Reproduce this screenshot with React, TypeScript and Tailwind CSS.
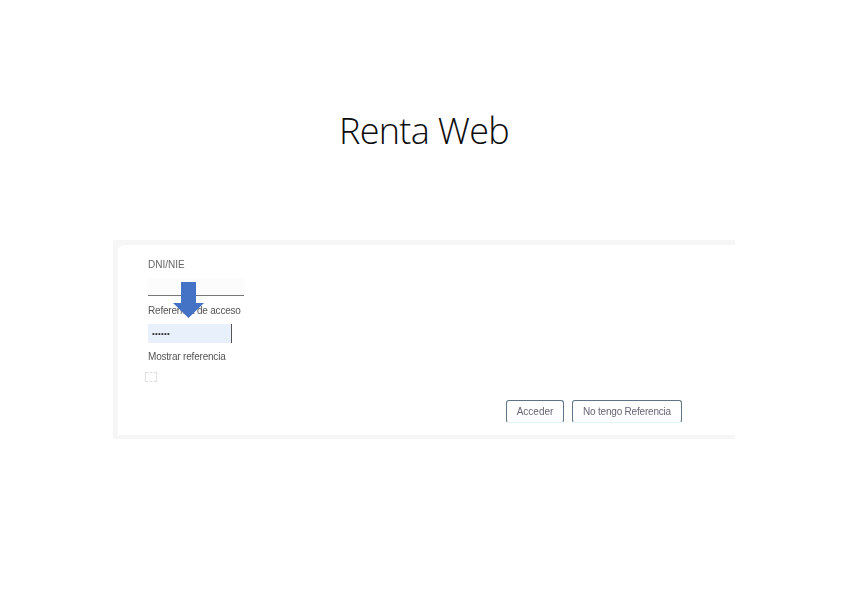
export default function App() {
  return (
    <div className="w-[848px] h-[599px] bg-white overflow-hidden flex flex-col items-center font-['Liberation_Sans',sans-serif]">
      <h1 className="mt-[108px] h-[46px] w-full text-center text-[36px] leading-[46px] font-light text-[#0d0d0d] font-['Open_Sans',sans-serif] tracking-[-0.7px]">
        Renta Web
      </h1>

      <div className="mt-[86px] w-[622px] h-[199px] bg-[#f6f6f6] pt-[5px] pl-[5px] pb-[4px]">
        <div className="relative w-full h-full bg-white rounded-tl-[6px] pl-[30px] pt-[14px] flex flex-col">
          <label className="text-[10px] leading-[12px] text-[#666] blur-[0.6px]">DNI/NIE</label>

          <div className="mt-[7px] w-[96px] h-[18px] bg-[#fcfcfc] border-b border-[#777]" />

          <label className="mt-[9px] text-[10px] leading-[12px] tracking-[-0.2px] text-[#555] blur-[0.5px]">Referencia de acceso</label>

          <div className="mt-[7px] w-[84px] h-[19px] bg-[#e8f0fb] border-r border-[#555] flex items-center pl-[4px]">
            <span className="text-[8px] leading-none text-[#333] tracking-[0.2px] blur-[0.3px]">••••••</span>
          </div>

          <label className="mt-[8px] text-[10px] leading-[12px] tracking-[-0.2px] text-[#555] blur-[0.5px]">Mostrar referencia</label>

          <div className="mt-[9px] ml-[-3px] w-[12px] h-[10px] border border-dashed border-[#ddd] blur-[0.4px]" />

          <div className="absolute left-[388px] top-[155px] flex gap-[8px]">
            <button className="w-[58px] h-[23px] rounded-[3px] border border-[#5f7484] border-b-[#dff3fa] text-[10px] text-[#667] blur-[0.5px]">
              Acceder
            </button>
            <button className="w-[110px] h-[23px] rounded-[3px] border border-[#5f7484] border-b-[#dff3fa] text-[10px] tracking-[-0.2px] text-[#667] blur-[0.5px]">
              No tengo Referencia
            </button>
          </div>

          <svg className="absolute left-[55px] top-[37px]" width="32" height="36" viewBox="0 0 32 36">
            <path d="M8 0H23V21H31L15.5 36L0 21H8Z" fill="#4472c4" />
          </svg>
        </div>
      </div>
    </div>
  );
}
